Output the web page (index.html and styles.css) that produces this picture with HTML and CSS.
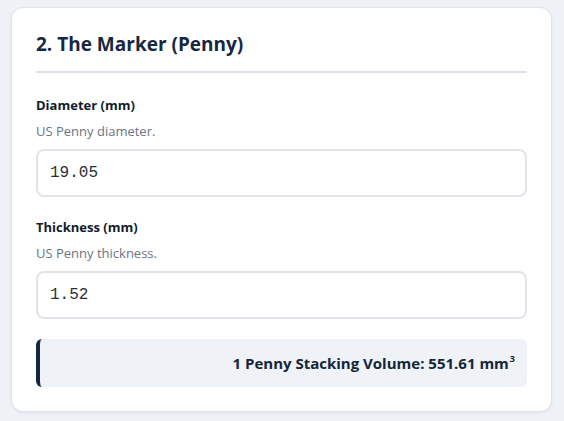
FILE: index.html
```html
<!DOCTYPE html>
<html lang="en">
<head>
	<meta charset="UTF-8">
	<meta name="viewport" content="width=device-width, initial-scale=1.0">
	<title>The Marker (Penny)</title>

	<link rel="stylesheet" href="styles.css">
</head>
<body>

	<div class="panel">
		<h2 class="panel__title">2. The Marker (Penny)</h2>

		<div class="field">
			<label class="field__label" for="diameter">Diameter (mm)</label>
			<div class="field__help">US Penny diameter.</div>
			<input class="field__input" id="diameter" type="text" value="19.05">
		</div>

		<div class="field">
			<label class="field__label" for="thickness">Thickness (mm)</label>
			<div class="field__help">US Penny thickness.</div>
			<input class="field__input" id="thickness" type="text" value="1.52">
		</div>

		<div class="result">1 Penny Stacking Volume: 551.61 mm<sup>3</sup></div>
	</div>

</body>
</html>
```

FILE: styles.css
```css
* {
	margin: 0;
	padding: 0;
	box-sizing: border-box;
}

body {
	background: #eef1f6;
	font-family: "Open Sans", "Noto Sans", sans-serif;
	color: #1b2a3d;
	padding: 7px 12px 10px 11px;
}

.panel {
	background: #ffffff;
	border: 1px solid #dfe4eb;
	border-radius: 12px;
	padding: 24px 24px 24px 24px;
	box-shadow: 0 1px 3px rgba(30, 45, 70, 0.06);
}

.panel__title {
	font-size: 19px;
	font-weight: 700;
	line-height: 25px;
	color: #16283f;
	padding-bottom: 14px;
	border-bottom: 2px solid #dbe2ea;
	margin-bottom: 23px;
}

.field {
	margin-bottom: 21px;
}

.field + .field {
	margin-bottom: 20px;
}

.field__label {
	display: block;
	font-size: 13px;
	font-weight: 700;
	line-height: 18px;
	color: #111c2b;
	margin-bottom: 8px;
}

.field__help {
	font-size: 13px;
	line-height: 18px;
	color: #6b7482;
	margin-bottom: 9px;
}

.field__input {
	display: block;
	width: 100%;
	height: 48px;
	border: 2px solid #e1e5ea;
	border-radius: 8px;
	padding: 0 12px;
	font-family: "Liberation Mono", "DejaVu Sans Mono", monospace;
	font-size: 16px;
	color: #2a2f36;
	background: #ffffff;
	outline: none;
}

.result {
	background: #eff2f6;
	border-left: 4px solid #15283f;
	border-radius: 6px;
	height: 48px;
	line-height: 48px;
	text-align: right;
	padding: 0 12px;
	font-size: 15px;
	font-weight: 700;
	color: #15263a;
}

.result sup {
	font-size: 9px;
	line-height: 0;
	vertical-align: 7px;
	margin-left: 1px;
}
```
